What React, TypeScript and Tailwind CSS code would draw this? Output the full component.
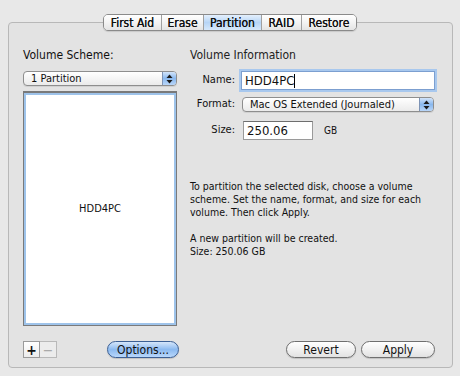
import React from "react";

const font = { fontFamily: '"DejaVu Sans Condensed", "DejaVu Sans", "Liberation Sans", sans-serif', fontStretch: "condensed" as const };

function Arrows() {
  return (
    <svg width="7" height="10" viewBox="0 0 7 10">
      <path d="M3.5 0.5 L6.5 4 L0.5 4 Z" fill="#1a1a1a" />
      <path d="M3.5 9.5 L6.5 6 L0.5 6 Z" fill="#1a1a1a" />
    </svg>
  );
}

function Popup({ label, className }: { label: string; className: string }) {
  return (
    <div
      className={
        "flex items-stretch rounded-[4px] border border-[#8e8e8e] bg-gradient-to-b from-white to-[#ebebeb] overflow-hidden shadow-[0_1px_0_rgba(0,0,0,0.08)] " +
        className
      }
    >
      <div className="flex-1 flex items-center pl-[7px] text-[11px] text-[#111] leading-none">{label}</div>
      <div className="w-[14px] flex items-center justify-center border-l border-[#7d93b5] bg-gradient-to-b from-[#d2e4fa] via-[#8ab8ee] to-[#b9d6f8]">
        <Arrows />
      </div>
    </div>
  );
}

function Tab({ label, w, selected, last }: { label: string; w: string; selected?: boolean; last?: boolean }) {
  return (
    <div
      className={
        "h-full flex items-center justify-center text-[12px] text-[#111] font-bold " +
        w +
        (last ? "" : " border-r border-[#a0a0a0]") +
        (selected
          ? " bg-gradient-to-b from-[#e4f0fd] via-[#b7d5f6] to-[#d6e8fb]"
          : " bg-gradient-to-b from-white via-[#f3f3f3] to-[#e4e4e4]")
      }
    >
      <span className="[text-shadow:0_0_0_#111] font-normal">{label}</span>
    </div>
  );
}

function AquaButton({ label, blue, className }: { label: string; blue?: boolean; className: string }) {
  return (
    <div
      className={
        "h-[17px] rounded-full border flex items-center justify-center text-[12px] text-[#111] shadow-[0_1px_1px_rgba(0,0,0,0.15)] " +
        (blue
          ? "border-[#3b5f94] bg-gradient-to-b from-[#d5e6fa] via-[#8cbaf0] to-[#b8d7fb]"
          : "border-[#6f6f6f] bg-gradient-to-b from-white via-[#f1f1f1] to-[#e2e2e2]") +
        " " +
        className
      }
    >
      {label}
    </div>
  );
}

export default function App() {
  return (
    <div className="w-[460px] h-[376px] bg-[#e8e8e8] pt-[14px] px-[8px]" style={font}>
      <div className="flex justify-center relative z-10">
        <div className="flex h-[17px] rounded-[5px] border border-[#8a8a8a] overflow-hidden shadow-[0_1px_1px_rgba(0,0,0,0.12)]">
          <Tab label="First Aid" w="w-[58px]" />
          <Tab label="Erase" w="w-[42px]" />
          <Tab label="Partition" w="w-[58px]" selected />
          <Tab label="RAID" w="w-[40px]" />
          <Tab label="Restore" w="w-[54px]" last />
        </div>
      </div>
      <div className="-mt-[9px] h-[346px] w-[445px] rounded-[4px] border border-[#b8b8b8] bg-[#e3e3e3] flex flex-col pl-[14px] pr-[17px]">
        <div className="flex">
          {/* Left column */}
          <div className="w-[154px] flex flex-col">
            <div className="mt-[24px] h-[16px] text-[12px] text-[#111] leading-[16px]">Volume Scheme:</div>
            <Popup label="1 Partition" className="mt-[8px] h-[15px] w-[154px]" />
            <div className="mt-[5px] h-[235px] bg-[#7a7a7a] p-px pt-[2px]">
              <div className="w-full h-full bg-white border-[2px] border-[#9ec3ea] flex items-center justify-center">
                <span className="text-[11px] text-[#111]">HDD4PC</span>
              </div>
            </div>
          </div>
          {/* Right column */}
          <div className="flex-1 pl-[13px] flex flex-col">
            <div className="mt-[24px] h-[16px] text-[12px] text-[#222] leading-[16px]">Volume Information</div>
            <div className="mt-[8px] flex items-center h-[19px]">
              <div className="w-[45px] text-right text-[11px] text-[#111]">Name:</div>
              <div className="ml-[6px] w-[194px] h-[19px] bg-white border border-[#7c9fd0] shadow-[0_0_0_2px_#a8c8ee] flex items-center pl-[3px] text-[13px] text-[#111]">
                HDD4PC<span className="w-px h-[14px] bg-black" />
              </div>
            </div>
            <div className="mt-[7px] flex items-center h-[15px]">
              <div className="w-[45px] text-right text-[11px] text-[#111]">Format:</div>
              <Popup label="Mac OS Extended (Journaled)" className="ml-[7px] h-[15px] w-[192px]" />
            </div>
            <div className="mt-[9px] flex items-center h-[19px]">
              <div className="w-[45px] text-right text-[11px] text-[#111]">Size:</div>
              <div className="ml-[8px] w-[70px] h-[19px] bg-white border border-[#9a9a9a] border-t-[#6e6e6e] flex items-center pl-[3px] text-[13px] text-[#111]">
                250.06
              </div>
              <div className="ml-[11px] text-[10px] text-[#111]">GB</div>
            </div>
            <div className="mt-[40px] text-[10.5px] leading-[13px] text-[#111] w-[245px]">
              To partition the selected disk, choose a volume scheme. Set the name, format, and size for each volume. Then click Apply.
            </div>
            <div className="mt-[13px] text-[10.5px] leading-[13px] text-[#111]">
              A new partition will be created.
              <br />
              Size: 250.06 GB
            </div>
          </div>
        </div>
        <div className="mt-[15px] flex items-center">
          <div className="flex">
            <div className="w-[17px] h-[17px] border border-[#9a9a9a] bg-gradient-to-b from-white to-[#ececec] flex items-center justify-center text-[14px] font-bold text-[#111] leading-none">
              +
            </div>
            <div className="w-[17px] h-[17px] border border-l-0 border-[#b9b9b9] bg-[#ececec] flex items-center justify-center text-[14px] text-[#aaa] leading-none">
              −
            </div>
          </div>
          <AquaButton label="Options..." blue className="ml-[50px] w-[72px]" />
          <div className="flex-1" />
          <AquaButton label="Revert" className="w-[70px]" />
          <AquaButton label="Apply" className="ml-[5px] w-[74px]" />
        </div>
      </div>
    </div>
  );
}
